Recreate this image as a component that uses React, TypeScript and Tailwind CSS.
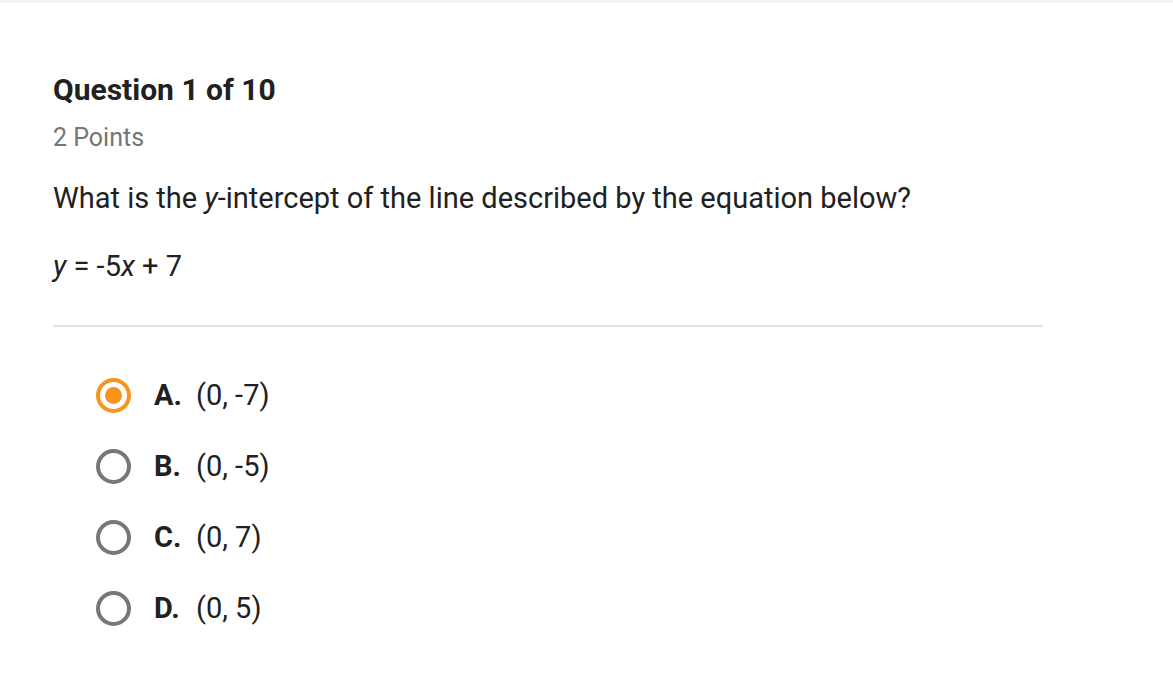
const options = [
  { letter: 'A.', text: '(0, -7)', selected: true },
  { letter: 'B.', text: '(0, -5)', selected: false },
  { letter: 'C.', text: '(0, 7)', selected: false },
  { letter: 'D.', text: '(0, 5)', selected: false },
]

function Radio({ selected }: { selected: boolean }) {
  if (selected) {
    return (
      <div className="flex h-[35px] w-[35px] items-center justify-center rounded-full border-[4px] border-[#f7941d]">
        <div className="h-[17px] w-[17px] rounded-full bg-[#f7941d]" />
      </div>
    )
  }
  return <div className="h-[35px] w-[35px] rounded-full border-[4px] border-[#777777]" />
}

export default function App() {
  return (
    <div className="min-h-[687px] w-full border-t-[3px] border-[#f4f4f4] bg-white font-['Roboto',sans-serif]">
      <div className="w-[1043px] pl-[53px] pt-[69px]">
        {/* Encabezado */}
        <h1 className="text-[30px] font-bold leading-[36px] text-[#212121]">Question 1 of 10</h1>
        <p className="mt-[15px] text-[25px] leading-[30px] text-[#757575]">2 Points</p>

        {/* Enunciado */}
        <p className="mt-[27px] text-[29px] leading-[36px] text-[#212121]">
          What is the <i>y</i>-intercept of the line described by the equation below?
        </p>
        <p className="mt-[32px] text-[29px] leading-[36px] text-[#212121]">
          <i>y</i> = -5<i>x</i> + 7
        </p>

        <div className="mt-[41px] h-[2px] bg-[#e3e3e3]" />

        {/* Opciones */}
        <div className="mt-[51px] flex flex-col gap-[36px] pl-[43px]">
          {options.map((o) => (
            <div key={o.letter} className="flex h-[35px] items-center">
              <Radio selected={o.selected} />
              <span className="ml-[23px] w-[42px] text-[29px] font-bold text-[#212121]">{o.letter}</span>
              <span className="text-[29px] text-[#212121]">{o.text}</span>
            </div>
          ))}
        </div>
      </div>
    </div>
  )
}
